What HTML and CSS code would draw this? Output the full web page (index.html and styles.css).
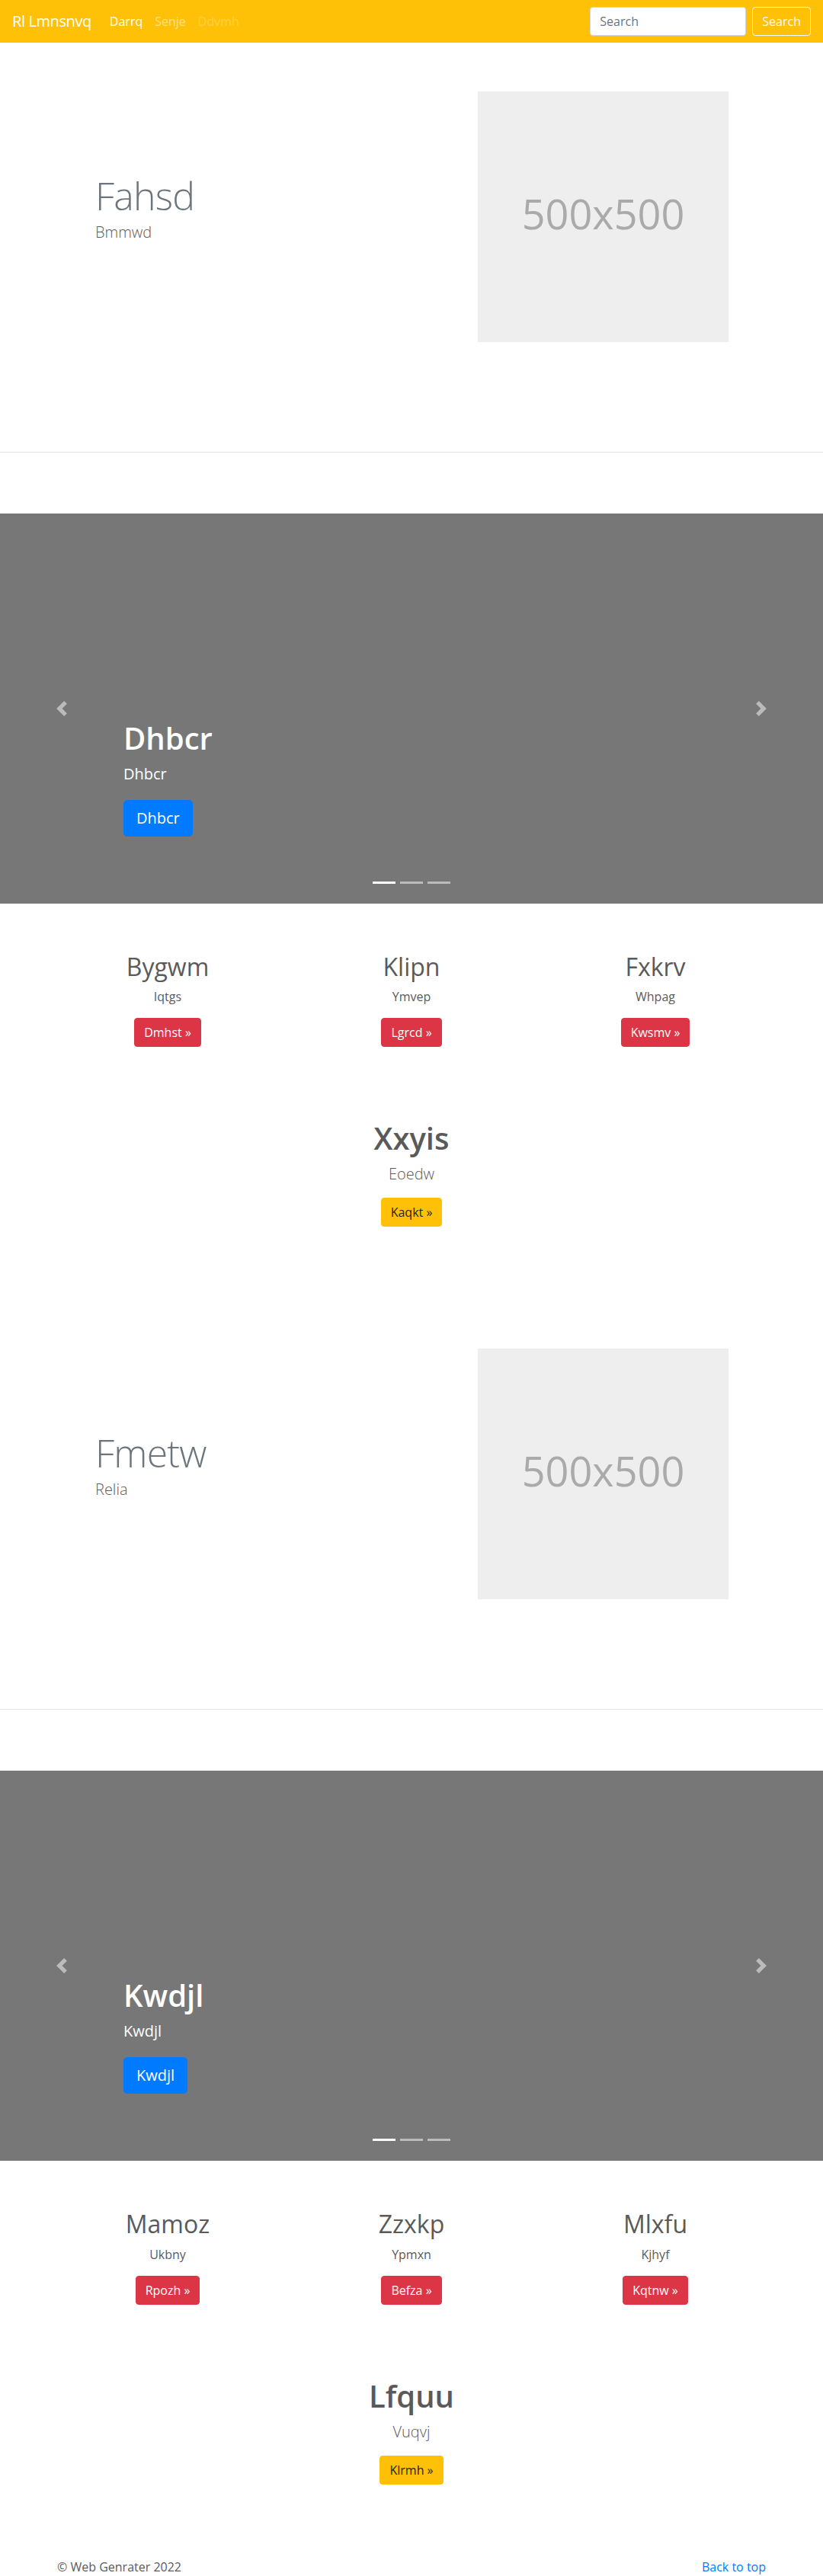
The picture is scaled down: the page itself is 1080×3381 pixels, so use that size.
FILE: index.html
```html
<!DOCTYPE html>
<html lang="en">
<head>
<meta charset="utf-8">
<title>Rl Lmnsnvq</title>
<link rel="stylesheet" href="styles.css">
</head>
<body>
<header class="navbar">
  <a class="brand" href="#">Rl Lmnsnvq</a>
  <ul class="nav">
    <li><a class="nav-link active" href="#">Darrq</a></li>
    <li><a class="nav-link" href="#">Senje</a></li>
    <li><a class="nav-link disabled" href="#">Ddvmh</a></li>
  </ul>
  <form class="search">
    <input class="search-input" type="text" placeholder="Search">
    <button class="btn btn-outline-light" type="button">Search</button>
  </form>
</header>

<main>
  <section class="featurette container">
    <div class="feat-text">
      <h2 class="feat-heading">Fahsd</h2>
      <p class="lead">Bmmwd</p>
    </div>
    <svg class="placeholder" width="329" height="329" viewBox="0 0 329 329" role="img" aria-label="500x500">
      <rect width="100%" height="100%" fill="#eee"></rect>
      <text class="ph-text" x="50%" y="50%" dy=".3em" text-anchor="middle" fill="#aaa">500x500</text>
    </svg>
  </section>

  <hr class="divider">

  <section class="carousel">
    <div class="caption">
      <h1 class="cap-title">Dhbcr</h1>
      <p class="cap-text">Dhbcr</p>
      <div class="btn-row"><a class="btn btn-lg btn-primary" href="#">Dhbcr</a></div>
    </div>
    <a class="ctrl ctrl-prev" href="#"><svg width="20" height="20" viewBox="0 0 8 8"><path fill="#fff" d="M5.25 0l-4 4 4 4 1.5-1.5L4.25 4l2.5-2.5L5.25 0z"/></svg></a>
    <a class="ctrl ctrl-next" href="#"><svg width="20" height="20" viewBox="0 0 8 8"><path fill="#fff" d="M2.75 0l-1.5 1.5L3.75 4l-2.5 2.5L2.75 8l4-4-4-4z"/></svg></a>
    <ol class="indicators">
      <li class="active"></li>
      <li></li>
      <li></li>
    </ol>
  </section>

  <section class="marketing container">
    <div class="cols">
      <div class="col">
        <h2 class="col-title">Bygwm</h2>
        <p class="col-text">Iqtgs</p>
        <div class="btn-row"><a class="btn btn-danger" href="#">Dmhst »</a></div>
      </div>
      <div class="col">
        <h2 class="col-title">Klipn</h2>
        <p class="col-text">Ymvep</p>
        <div class="btn-row"><a class="btn btn-danger" href="#">Lgrcd »</a></div>
      </div>
      <div class="col">
        <h2 class="col-title">Fxkrv</h2>
        <p class="col-text">Whpag</p>
        <div class="btn-row"><a class="btn btn-danger" href="#">Kwsmv »</a></div>
      </div>
    </div>
    <div class="callout">
      <h1 class="callout-title">Xxyis</h1>
      <p class="lead">Eoedw</p>
      <div class="btn-row"><a class="btn btn-warning" href="#">Kaqkt »</a></div>
    </div>
  </section>

  <section class="featurette container">
    <div class="feat-text">
      <h2 class="feat-heading">Fmetw</h2>
      <p class="lead">Relia</p>
    </div>
    <svg class="placeholder" width="329" height="329" viewBox="0 0 329 329" role="img" aria-label="500x500">
      <rect width="100%" height="100%" fill="#eee"></rect>
      <text class="ph-text" x="50%" y="50%" dy=".3em" text-anchor="middle" fill="#aaa">500x500</text>
    </svg>
  </section>

  <hr class="divider">

  <section class="carousel">
    <div class="caption">
      <h1 class="cap-title">Kwdjl</h1>
      <p class="cap-text">Kwdjl</p>
      <div class="btn-row"><a class="btn btn-lg btn-primary" href="#">Kwdjl</a></div>
    </div>
    <a class="ctrl ctrl-prev" href="#"><svg width="20" height="20" viewBox="0 0 8 8"><path fill="#fff" d="M5.25 0l-4 4 4 4 1.5-1.5L4.25 4l2.5-2.5L5.25 0z"/></svg></a>
    <a class="ctrl ctrl-next" href="#"><svg width="20" height="20" viewBox="0 0 8 8"><path fill="#fff" d="M2.75 0l-1.5 1.5L3.75 4l-2.5 2.5L2.75 8l4-4-4-4z"/></svg></a>
    <ol class="indicators">
      <li class="active"></li>
      <li></li>
      <li></li>
    </ol>
  </section>

  <section class="marketing container">
    <div class="cols">
      <div class="col">
        <h2 class="col-title">Mamoz</h2>
        <p class="col-text">Ukbny</p>
        <div class="btn-row"><a class="btn btn-danger" href="#">Rpozh »</a></div>
      </div>
      <div class="col">
        <h2 class="col-title">Zzxkp</h2>
        <p class="col-text">Ypmxn</p>
        <div class="btn-row"><a class="btn btn-danger" href="#">Befza »</a></div>
      </div>
      <div class="col">
        <h2 class="col-title">Mlxfu</h2>
        <p class="col-text">Kjhyf</p>
        <div class="btn-row"><a class="btn btn-danger" href="#">Kqtnw »</a></div>
      </div>
    </div>
    <div class="callout">
      <h1 class="callout-title">Lfquu</h1>
      <p class="lead">Vuqvj</p>
      <div class="btn-row"><a class="btn btn-warning" href="#">Klrmh »</a></div>
    </div>
  </section>
</main>

<footer class="footer container">
  <p class="copy">© Web Genrater 2022</p>
  <p class="top-link"><a href="#">Back to top</a></p>
</footer>
</body>
</html>
```

FILE: styles.css
```css
* { box-sizing: border-box; }

html, body {
  margin: 0;
  padding: 0;
}

body {
  font-family: "Open Sans", "Noto Sans", sans-serif;
  font-size: 16px;
  line-height: 1.5;
  color: #5a5a5a;
  background: #fff;
}

a { text-decoration: none; }

p, h1, h2, ul, ol { margin: 0; }

.container {
  width: 930px;
  margin-left: auto;
  margin-right: auto;
}

/* Navbar */
.navbar {
  display: flex;
  align-items: center;
  height: 56px;
  padding: 8px 16px;
  background: #ffc107;
}

.brand {
  font-size: 20px;
  line-height: 30px;
  padding: 5px 0;
  margin-right: 16px;
  color: #fff;
  white-space: nowrap;
  letter-spacing: -0.4px;
}

.nav {
  display: flex;
  list-style: none;
  padding: 0;
}

.nav-link {
  display: block;
  padding: 8px;
  line-height: 24px;
  color: rgba(255, 255, 255, 0.5);
}

.nav-link.active { color: #fff; }
.nav-link.disabled { color: rgba(255, 255, 255, 0.25); }

.search {
  display: flex;
  align-items: center;
  margin-left: auto;
}

.search-input {
  width: 205px;
  height: 38px;
  padding: 6px 12px;
  margin-right: 8px;
  font-family: inherit;
  font-size: 16px;
  line-height: 24px;
  color: #495057;
  background: #fff;
  border: 1px solid #ced4da;
  border-radius: 4px;
}

.search-input::placeholder { color: #6c757d; opacity: 1; }

/* Buttons */
.btn {
  display: inline-block;
  font-family: inherit;
  font-size: 16px;
  line-height: 24px;
  padding: 6px 12px;
  border: 1px solid transparent;
  border-radius: 4px;
  text-align: center;
  white-space: nowrap;
}

.btn-lg {
  font-size: 20px;
  line-height: 30px;
  padding: 8px 16px;
  border-radius: 4.8px;
}

.btn-outline-light {
  color: #f8f9fa;
  background: transparent;
  border-color: #f8f9fa;
}

.btn-primary { color: #fff; background: #007bff; border-color: #007bff; }
.btn-danger { color: #fff; background: #dc3545; border-color: #dc3545; }
.btn-warning { color: #212529; background: #ffc107; border-color: #ffc107; }

.btn-row { display: flex; }

/* Featurette */
.featurette {
  display: flex;
  align-items: flex-start;
  padding: 64px 0;
}

.feat-text {
  flex: 1;
  padding-left: 50px;
  padding-top: 112px;
}

.feat-heading {
  font-size: 50px;
  font-weight: 300;
  line-height: 1;
  letter-spacing: -0.8px;
  color: #6c757d;
  margin-bottom: 8px;
}

.lead {
  font-size: 20px;
  font-weight: 300;
  line-height: 30px;
  margin-bottom: 16px;
}

.placeholder {
  display: block;
  flex: 0 0 329px;
  margin-right: 49px;
}

.ph-text {
  font-family: "Open Sans", "Noto Sans", sans-serif;
  font-size: 54px;
}

.divider {
  margin: 80px 0;
  border: 0;
  border-top: 1px solid rgba(0, 0, 0, 0.1);
  height: 0;
}

/* Carousel */
.carousel {
  position: relative;
  height: 512px;
  background: #777;
  margin-bottom: 64px;
  overflow: hidden;
}

.caption {
  position: absolute;
  left: 15%;
  right: 15%;
  bottom: 48px;
  padding: 20px 0;
  color: #fff;
  z-index: 10;
}

.cap-title {
  font-size: 40px;
  font-weight: 600;
  line-height: 1.2;
  margin-bottom: 8px;
}

.cap-text {
  font-size: 20px;
  line-height: 30px;
  margin-bottom: 19px;
}

.caption .btn-row { margin-bottom: 20px; }

.ctrl {
  position: absolute;
  top: 0;
  bottom: 0;
  width: 15%;
  display: flex;
  align-items: center;
  justify-content: center;
  opacity: 0.5;
}

.ctrl svg { display: block; }
.ctrl-prev { left: 0; }
.ctrl-next { right: 0; }

.indicators {
  position: absolute;
  left: 15%;
  right: 15%;
  bottom: 0;
  display: flex;
  justify-content: center;
  list-style: none;
  padding: 0;
  margin-bottom: 16px;
  z-index: 15;
}

.indicators li {
  box-sizing: content-box;
  width: 30px;
  height: 3px;
  margin: 0 3px;
  background: #fff;
  background-clip: padding-box;
  border-top: 10px solid transparent;
  border-bottom: 10px solid transparent;
  opacity: 0.5;
}

.indicators li.active { opacity: 1; }

/* Marketing */
.cols {
  display: grid;
  grid-template-columns: repeat(3, 1fr);
  margin: 0 -15px;
}

.col {
  text-align: center;
  margin-bottom: 24px;
  padding: 0 15px;
}

.col .btn-row { justify-content: center; margin-bottom: 16px; }

.col-title {
  font-size: 32px;
  font-weight: 500;
  line-height: 1.2;
  margin-bottom: 8px;
}

.col-text {
  margin: 0 12px 16px;
}

.callout {
  text-align: center;
  padding-top: 56px;
  padding-bottom: 96px;
}

.callout-title {
  font-size: 40px;
  font-weight: 600;
  line-height: 1.2;
  margin-bottom: 8px;
}

.callout .btn-row { justify-content: center; }

/* Footer */
.footer {
  display: flex;
  justify-content: space-between;
}

.footer p { margin-bottom: 16px; }

.top-link a { color: #007bff; }
```
